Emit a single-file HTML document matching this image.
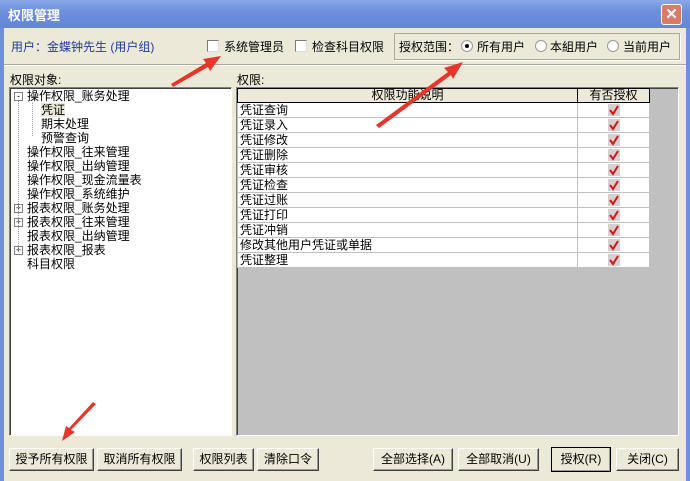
<!DOCTYPE html>
<html><head><meta charset="utf-8"><style>
*{margin:0;padding:0;box-sizing:border-box}
body{width:690px;height:481px;overflow:hidden;background:#ece9d8;font-family:"Liberation Sans","WenQuanYi Zen Hei","Noto Sans CJK SC",sans-serif;font-size:12px;color:#000;position:relative}
.a{position:absolute;white-space:nowrap}
#title{left:0;top:0;width:690px;height:28px;background:linear-gradient(#8aa8e8,#6d8fdc 40%,#6386d6);}
#title span{position:absolute;left:8px;top:5px;color:#fff;font-weight:bold;font-size:13px}
#close{left:661px;top:4px;width:21px;height:21px;background:#d97a6a;border:1px solid #fff;border-radius:3px;color:#fff;font-weight:bold;text-align:center;line-height:19px;font-size:15px}
.lb{left:0;top:28px;width:4px;height:453px;background:#6f8fdc}
.rb{left:686px;top:28px;width:4px;height:453px;background:#6f8fdc}
.cb{width:12px;height:12px;background:#fff;border:1px solid #7a7a7a;border-right-color:#ddd;border-bottom-color:#ddd}
.rd{width:12px;height:12px;border-radius:50%;background:#fff;border:1px solid #999}
.box{background:#fff;border:1px solid #808080;border-right-color:#fff;border-bottom-color:#fff;box-shadow:inset 1px 1px 0 #404040}
.btn{height:23px;border:1px solid #fff;border-right-color:#404040;border-bottom-color:#404040;box-shadow:inset -1px -1px 0 #999;background:#ece9d8;text-align:center;line-height:21px;font-size:12px}
table{border-collapse:collapse}
td{height:15px;border:1px solid #c0c0c0;padding:0 2px;font-size:12px;line-height:13px}
.tr{left:27px}
.ck{display:inline-block;width:12px;height:12px;background:#d8d0d0;position:relative;vertical-align:middle}
</style></head><body>
<div id="title" class="a"><span>权限管理</span></div>
<div id="close" class="a">✕</div>
<div class="a lb"></div><div class="a rb"></div>

<div class="a" style="left:11px;top:38px;color:#1c3c9c">用户：金蝶钟先生 (用户组)</div>
<div class="a cb" style="left:207px;top:40px"></div>
<div class="a" style="left:224px;top:38px">系统管理员</div>
<div class="a cb" style="left:295px;top:40px"></div>
<div class="a" style="left:312px;top:38px">检查科目权限</div>
<div class="a" style="left:394px;top:33px;width:286px;height:27px;border:1px solid #aca899;box-shadow:1px 1px 0 #fff"></div>
<div class="a" style="left:399px;top:38px">授权范围：</div>
<div class="a rd" style="left:461px;top:40px"></div><div class="a" style="left:465px;top:44px;width:4px;height:4px;background:#000;border-radius:50%"></div>
<div class="a" style="left:477px;top:38px">所有用户</div>
<div class="a rd" style="left:535px;top:40px"></div>
<div class="a" style="left:550px;top:38px">本組用户</div>
<div class="a rd" style="left:607px;top:40px"></div>
<div class="a" style="left:623px;top:38px">当前用户</div>
<div class="a" style="left:4px;top:64px;width:682px;height:2px;border-top:1px solid #aca899;border-bottom:1px solid #fff"></div>

<div class="a" style="left:10px;top:71px">权限对象:</div>
<div class="a box" style="left:9px;top:87px;width:223px;height:349px"></div>
<div class="a" style="left:14px;top:89px;line-height:14px;font-size:12px">
<div style="position:relative;height:14px"><span style="position:absolute;left:0;top:3px;width:9px;height:9px;border:1px solid #808080;font-size:9px;line-height:6px;text-align:center">-</span><span style="position:absolute;left:13px">操作权限_账务处理</span></div>
<div style="position:relative;height:14px"><span style="position:absolute;left:27px;background:#ece9d8">凭证</span></div>
<div style="position:relative;height:14px"><span style="position:absolute;left:27px">期末处理</span></div>
<div style="position:relative;height:14px"><span style="position:absolute;left:27px">预警查询</span></div>
<div style="position:relative;height:14px"><span style="position:absolute;left:13px">操作权限_往来管理</span></div>
<div style="position:relative;height:14px"><span style="position:absolute;left:13px">操作权限_出纳管理</span></div>
<div style="position:relative;height:14px"><span style="position:absolute;left:13px">操作权限_现金流量表</span></div>
<div style="position:relative;height:14px"><span style="position:absolute;left:13px">操作权限_系统维护</span></div>
<div style="position:relative;height:14px"><span style="position:absolute;left:0;top:3px;width:9px;height:9px;border:1px solid #808080;font-size:9px;line-height:7px;text-align:center">+</span><span style="position:absolute;left:13px">报表权限_账务处理</span></div>
<div style="position:relative;height:14px"><span style="position:absolute;left:0;top:3px;width:9px;height:9px;border:1px solid #808080;font-size:9px;line-height:7px;text-align:center">+</span><span style="position:absolute;left:13px">报表权限_往来管理</span></div>
<div style="position:relative;height:14px"><span style="position:absolute;left:13px">报表权限_出纳管理</span></div>
<div style="position:relative;height:14px"><span style="position:absolute;left:0;top:3px;width:9px;height:9px;border:1px solid #808080;font-size:9px;line-height:7px;text-align:center">+</span><span style="position:absolute;left:13px">报表权限_报表</span></div>
<div style="position:relative;height:14px"><span style="position:absolute;left:13px">科目权限</span></div>
</div>
<div class="a" style="left:18px;top:100px;height:152px;border-left:1px dotted #999"></div>
<div class="a" style="left:32px;top:103px;height:33px;border-left:1px dotted #999"></div>

<div class="a" style="left:237px;top:71px">权限:</div>
<div class="a" style="left:236px;top:87px;width:443px;height:349px;background:#c0c0c0;border:1px solid #808080;border-right-color:#fff;border-bottom-color:#fff;box-shadow:inset 1px 1px 0 #404040"></div>
<table class="a" style="left:237px;top:88px;width:413px;background:#fff;border:1px solid #000">
<tr><td style="width:340px;background:#ece9d8;text-align:center;border-color:#000;height:14px">权限功能说明</td><td style="background:#ece9d8;text-align:center;border-color:#000;height:14px">有否授权</td></tr>
<tr><td>凭证查询</td><td style="text-align:center"><i class="ck"></i></td></tr>
<tr><td>凭证录入</td><td style="text-align:center"><i class="ck"></i></td></tr>
<tr><td>凭证修改</td><td style="text-align:center"><i class="ck"></i></td></tr>
<tr><td>凭证删除</td><td style="text-align:center"><i class="ck"></i></td></tr>
<tr><td>凭证审核</td><td style="text-align:center"><i class="ck"></i></td></tr>
<tr><td>凭证检查</td><td style="text-align:center"><i class="ck"></i></td></tr>
<tr><td>凭证过账</td><td style="text-align:center"><i class="ck"></i></td></tr>
<tr><td>凭证打印</td><td style="text-align:center"><i class="ck"></i></td></tr>
<tr><td>凭证冲销</td><td style="text-align:center"><i class="ck"></i></td></tr>
<tr><td>修改其他用户凭证或单据</td><td style="text-align:center"><i class="ck"></i></td></tr>
<tr><td>凭证整理</td><td style="text-align:center"><i class="ck"></i></td></tr>
</table>
<svg class="a" style="left:607px;top:103px" width="14" height="170">
<g stroke="#d01818" stroke-width="2" fill="none">
<path d="M3 7 L6 11 L11 3"/><path d="M3 22 L6 26 L11 18"/><path d="M3 37 L6 41 L11 33"/><path d="M3 52 L6 56 L11 48"/><path d="M3 67 L6 71 L11 63"/><path d="M3 82 L6 86 L11 78"/><path d="M3 97 L6 101 L11 93"/><path d="M3 112 L6 116 L11 108"/><path d="M3 127 L6 131 L11 123"/><path d="M3 142 L6 146 L11 138"/><path d="M3 157 L6 161 L11 153"/>
</g></svg>

<div class="a btn" style="left:9px;top:448px;width:85px">授予所有权限</div>
<div class="a btn" style="left:97px;top:448px;width:85px">取消所有权限</div>
<div class="a btn" style="left:193px;top:448px;width:61px">权限列表</div>
<div class="a btn" style="left:257px;top:448px;width:62px">清除口令</div>
<div class="a btn" style="left:373px;top:448px;width:80px">全部选择(A)</div>
<div class="a btn" style="left:458px;top:448px;width:81px">全部取消(U)</div>
<div class="a btn" style="left:551px;top:447px;width:60px;height:25px;border:1px solid #000;line-height:23px">授权(R)</div>
<div class="a btn" style="left:616px;top:448px;width:63px">关闭(C)</div>

<svg class="a" style="left:0;top:0" width="690" height="481">
<g fill="#e8352a" stroke="none">
<path d="M171 84 L206 63 L203 59 L221 56 L210 71 L208 67 L173 87 Z"/>
<path d="M376 125 L448 72 L444 68 L463 62 L453 79 L451 75 L379 128 Z"/>
<path d="M96 404 L71 430 L75 432 L62 441 L66 426 L69 428 L93 402 Z"/>
</g></svg>
</body></html>
